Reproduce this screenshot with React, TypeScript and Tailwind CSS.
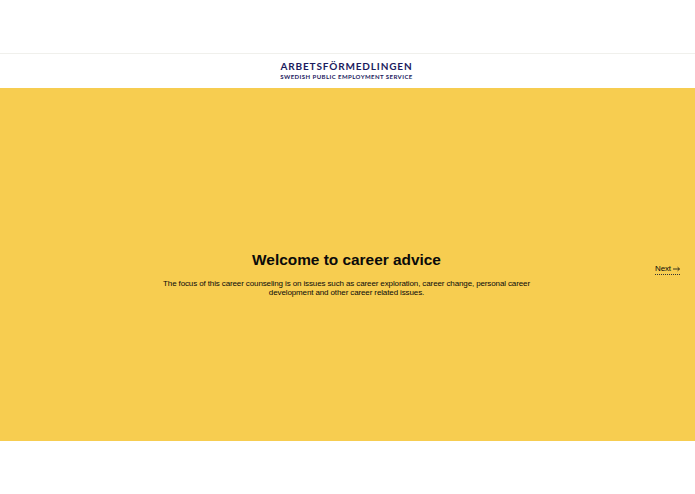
export default function App() {
  return (
    <div className="h-[494px] w-full flex flex-col bg-white font-['Liberation_Sans',Arial,sans-serif] text-[#0a0a0a] overflow-hidden">
      <div className="h-[54px] shrink-0 border-b border-[#f0f0ec]" />
      <header className="h-[34px] shrink-0 flex flex-col items-center justify-center pr-[2px] text-[#1b1b5e] font-['Lato',sans-serif] uppercase">
        <div className="text-[10px] leading-[11px] font-bold tracking-[0.85px]">Arbetsförmedlingen</div>
        <div className="text-[6px] leading-[9px] tracking-[0.44px] font-bold">Swedish Public Employment Service</div>
      </header>
      <main className="relative h-[353px] shrink-0 bg-[#f7cd50] flex flex-col items-center justify-center pt-[18px] pr-[2px] antialiased">
        <h1 className="text-[15.4px] leading-[20px] font-bold">Welcome to career advice</h1>
        <p className="mt-[9px] w-[372px] text-center text-[8px] leading-[9px] tracking-[-0.12px]">
          The focus of this career counseling is on issues such as career exploration, career change, personal career
          development and other career related issues.
        </p>
        <a className="absolute left-[655px] top-[176px] flex items-center gap-[2px] text-[8px] leading-[10px] tracking-[-0.12px] border-b border-dotted border-[#333]">
          Next
          <svg width="7" height="6" viewBox="0 0 7 6" fill="none" stroke="#111" strokeWidth="0.8">
            <path d="M0 3h6.4M4.6 1.2l1.9 1.8-1.9 1.8" />
          </svg>
        </a>
      </main>
    </div>
  );
}
